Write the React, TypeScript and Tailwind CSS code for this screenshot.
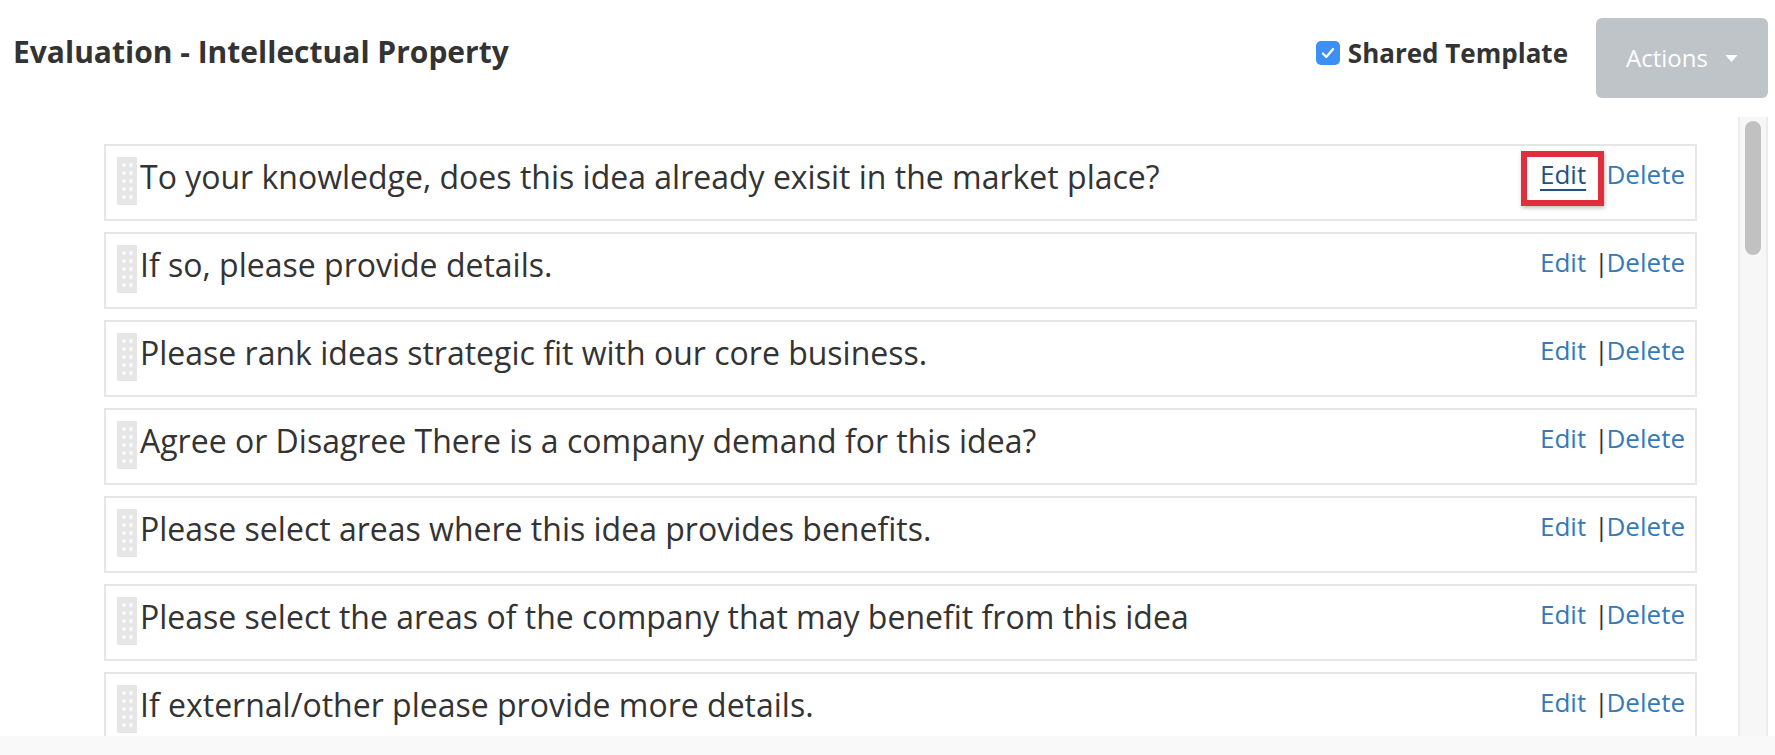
import React from "react";

const QUESTIONS = [
  "To your knowledge, does this idea already exisit in the market place?",
  "If so, please provide details.",
  "Please rank ideas strategic fit with our core business.",
  "Agree or Disagree There is a company demand for this idea?",
  "Please select areas where this idea provides benefits.",
  "Please select the areas of the company that may benefit from this idea",
  "If external/other please provide more details.",
];

function DragHandle() {
  return (
    <div className="grid h-[48px] w-[20px] shrink-0 grid-cols-2 content-center justify-items-center gap-x-[2px] gap-y-[4px] bg-[#e6e6e6] px-[4px]">
      {Array.from({ length: 10 }).map((_, i) => (
        <span key={i} className="h-[4px] w-[4px] rounded-full bg-[#fafafa]" />
      ))}
    </div>
  );
}

function QuestionRow({ text, highlighted }: { text: string; highlighted?: boolean }) {
  return (
    <div className="flex h-[77px] items-start border-2 border-[#e6e6e6] bg-white pl-[11px] pr-[10px] pt-[11px]">
      <DragHandle />
      <p className="ml-[3px] flex-1 whitespace-nowrap text-[32px] leading-[39px] text-[#333]">{text}</p>
      <div className="flex items-center pt-[2px] text-[26px] leading-[30px]">
        <span className="relative">
          <a
            href="#"
            className={highlighted ? "text-[#23527c] underline underline-offset-[5px]" : "text-[#337ab7]"}
          >
            Edit
          </a>
          {highlighted && (
            <span className="pointer-events-none absolute left-[-19px] top-[-8px] h-[55px] w-[83px] border-[6px] border-[#df2f3c] shadow-[1px_2px_4px_rgba(0,0,0,0.25)]" />
          )}
        </span>
        <span className="ml-[8px] mr-[-2px] text-[#333]">|</span>
        <a href="#" className="text-[#337ab7]">
          Delete
        </a>
      </div>
    </div>
  );
}

export default function App() {
  return (
    <div
      className="flex h-[755px] w-[1775px] flex-col overflow-hidden bg-white"
      style={{ fontFamily: '"Open Sans", "Liberation Sans", sans-serif' }}
    >
      <header className="flex h-[117px] shrink-0 items-start pl-[13px] pr-[7px]">
        <h1 className="mt-[32px] flex-1 text-[30px] font-bold leading-[40px] text-[#333]">
          Evaluation - Intellectual Property
        </h1>
        <label className="mr-[28px] mt-[33px] flex items-center gap-[8px]">
          <span className="flex h-[24px] w-[24px] items-center justify-center rounded-[5px] bg-[#3b8ff5]">
            <svg viewBox="0 0 16 16" className="h-[18px] w-[18px]" fill="none">
              <path d="M3.5 8.5l3 3 6-7" stroke="white" strokeWidth="2" strokeLinecap="round" strokeLinejoin="round" />
            </svg>
          </span>
          <span className="text-[26px] font-bold leading-[40px] text-[#333]">Shared Template</span>
        </label>
        <button
          type="button"
          className="mt-[18px] flex h-[80px] w-[172px] items-center justify-center gap-[17px] rounded-[6px] bg-[#bfc4c8] text-[24px] text-white"
        >
          Actions
          <svg viewBox="0 0 14 8" className="h-[7px] w-[13px]">
            <path d="M0 0h14L7 8z" fill="white" />
          </svg>
        </button>
      </header>

      <main className="flex min-h-0 flex-1">
        <div className="flex-1 overflow-hidden pl-[104px] pr-[41px] pt-[27px]">
          <div className="flex flex-col gap-[11px]">
            {QUESTIONS.map((q, i) => (
              <QuestionRow key={q} text={q} highlighted={i === 0} />
            ))}
          </div>
        </div>
        <div className="mr-[7px] w-[30px] shrink-0 border-x-2 border-[#ececec] bg-[#f7f7f7] pt-[4px]">
          <div className="mx-auto h-[134px] w-[16px] rounded-full bg-[#c1c1c1]" />
        </div>
      </main>

      <footer className="h-[19px] shrink-0 bg-[#f9f9f9]" />
    </div>
  );
}
